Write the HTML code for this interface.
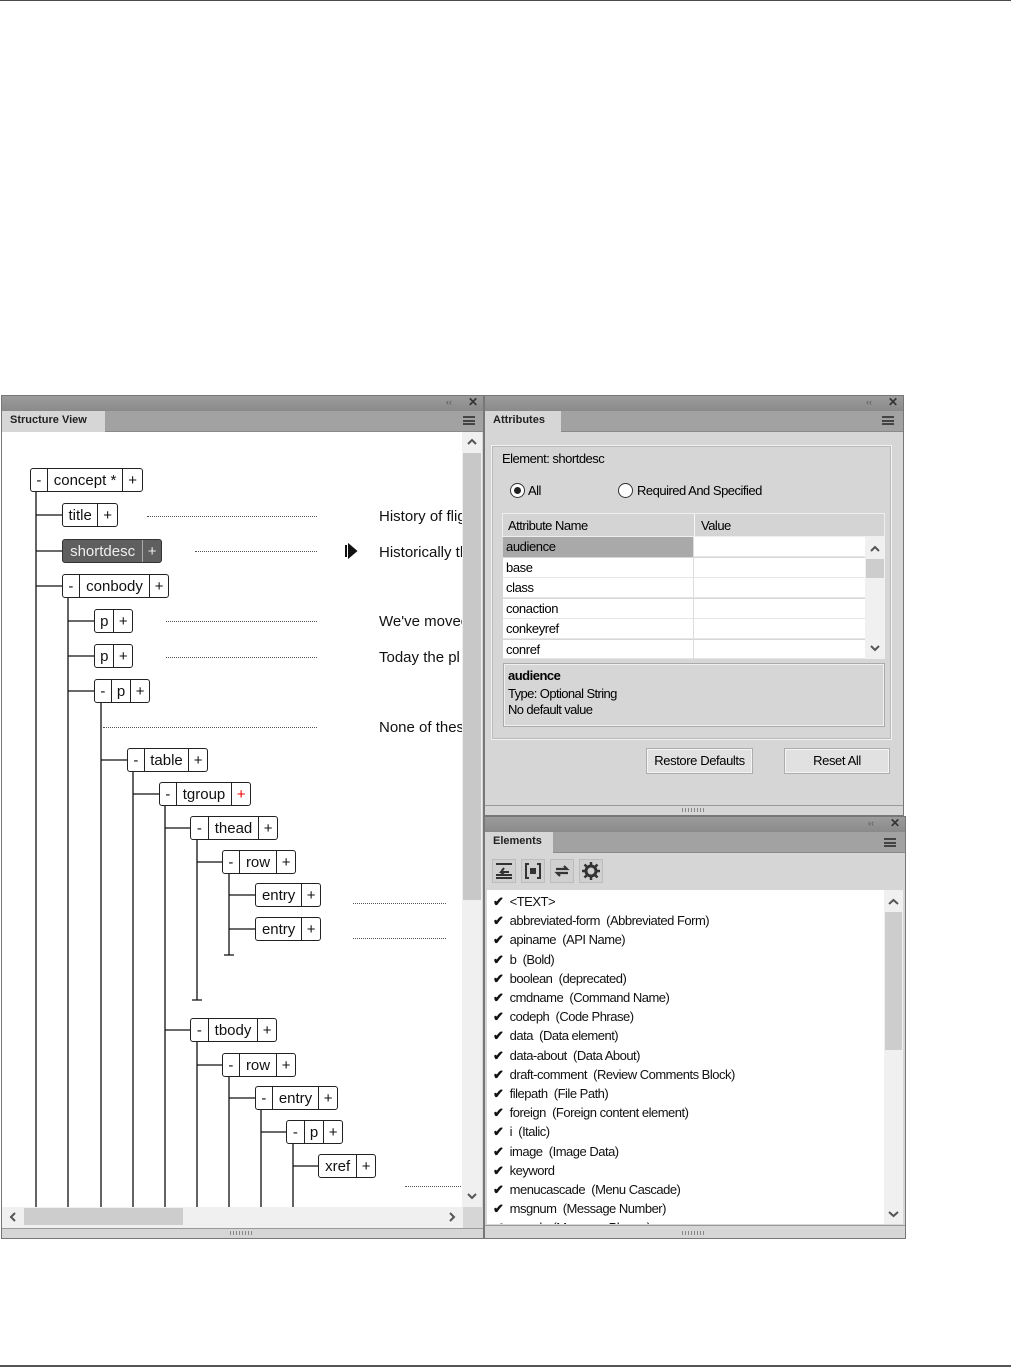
<!DOCTYPE html>
<html><head><meta charset="utf-8"><style>
*{margin:0;padding:0;box-sizing:border-box}
body{width:1011px;height:1367px;background:#fff;position:relative;overflow:hidden;font-family:"Liberation Sans",sans-serif;}
.a{position:absolute}
.tb{background:linear-gradient(#9c9c9c,#8a8a8a);}
.tabrow{background:#a2a2a2;border-bottom:1px solid #8a8a8a}
.tab{background:#d6d6d6;font-size:11px;font-weight:bold;color:#222;padding:3px 0 0 8px}
.node{position:absolute;height:24px;border:1px solid #222;border-radius:3px;background:#fff;display:flex;font-size:15px;color:#111;line-height:24px}
.node span{border-left:1px solid #222;text-align:center}
.node span:first-child{border-left:none}
.dot{position:absolute;height:0;border-top:1px dotted #555}
.t{position:absolute;font-size:15px;color:#111;white-space:nowrap}
.row{position:absolute;left:503px;width:362px;height:20px;font-size:13px;letter-spacing:-0.4px;line-height:20px;background:#fff;border-bottom:1px solid #e6e6e6}
.row b{font-weight:normal;position:absolute;left:3px}
.btn{position:absolute;height:26px;border:1px solid #adadad;background:#e1e1e1;font-size:13px;letter-spacing:-0.4px;text-align:center;line-height:24px;box-shadow:inset 0 0 0 1px #f4f4f4}
.ic{position:absolute;top:859px;width:24px;height:24px;background:#d0d0d0;border:1px solid #bcbcbc}
.chev{position:absolute}
</style></head><body>
<div class="a" style="left:0;top:0;width:1011px;height:1px;background:#4a4a4a"></div>
<div class="a" style="left:0;top:1365px;width:1011px;height:2px;background:#555"></div>

<!-- Structure panel -->
<div class="a" style="left:1px;top:395px;width:483px;height:844px;background:#d6d6d6;border:1px solid #777"></div>
<div class="a tb" style="left:2px;top:396px;width:481px;height:15px"></div>
<div class="a" style="left:446px;top:397px;font-size:9px;color:#555">‹‹</div>
<div class="a" style="left:468px;top:395px;font-size:12px;font-weight:bold;color:#333">✕</div>
<div class="a tabrow" style="left:2px;top:411px;width:481px;height:21px"></div>
<div class="a tab" style="left:2px;top:411px;width:103px;height:21px">Structure View</div>
<div class="a" style="left:463px;top:416px;width:12px;height:9px;border-top:2px solid #444;border-bottom:2px solid #444"><div style="margin-top:1.5px;height:2px;background:#444"></div></div>
<div class="a" style="left:2px;top:432px;width:461px;height:775px;background:#fff"></div>
<div class="a" style="left:462px;top:432px;width:20px;height:775px;background:#f0f0f0"></div>
<div class="a" style="left:463px;top:453px;width:18px;height:447px;background:#c8c8c8"></div>
<svg class="chev" style="left:462px;top:432px" width="20" height="20"><path d="M6 12L10 8L14 12" stroke="#555" stroke-width="2" fill="none"/></svg>
<svg class="chev" style="left:462px;top:1186px" width="20" height="20"><path d="M6 8L10 12L14 8" stroke="#555" stroke-width="2" fill="none"/></svg>
<div class="a" style="left:2px;top:1207px;width:461px;height:21px;background:#f0f0f0"></div>
<div class="a" style="left:24px;top:1208px;width:159px;height:17px;background:#cdcdcd"></div>
<svg class="chev" style="left:3px;top:1207px" width="20" height="20"><path d="M12 6L8 10L12 14" stroke="#555" stroke-width="2" fill="none"/></svg>
<svg class="chev" style="left:442px;top:1207px" width="20" height="20"><path d="M8 6L12 10L8 14" stroke="#555" stroke-width="2" fill="none"/></svg>
<div class="a" style="left:2px;top:1228px;width:481px;height:1px;background:#999"></div>
<div class="a" style="left:230px;top:1231px;width:24px;height:4px;background:repeating-linear-gradient(90deg,#888 0 1px,transparent 1px 3px)"></div>

<svg class="a" style="left:0;top:0" width="484" height="1208">
<g stroke="#111" stroke-width="1.3" fill="none">
<path d="M36 492V1207M68 598V1207M101 703V1207M133 771V1207M165 805V1207M197 839V1000M192 1000H202M229 873V955M224 955H234M197 1042V1207M229 1076V1207M261 1109V1207M293 1143V1207"/>
<path d="M36 515H62M36 551H62M36 586H62M68 621H94M68 656H94M68 691H94M101 760H127M133 794H159M165 828H190M197 862H222M229 895H255M229 929H255M165 1030H190M197 1065H222M229 1098H255M261 1132H286M293 1166H318"/>
</g>
<path d="M346 545V557M349 545V557L356 551Z" stroke="#111" stroke-width="2" fill="#111"/>
</svg>

<div class="node" style="left:30px;top:468px;width:113px"><span style="width:16px">-</span><span style="width:76px">concept *</span><span style="width:20px">+</span></div>
<div class="node" style="left:62px;top:503px;width:56px"><span style="width:35px">title</span><span style="width:20px">+</span></div>
<div class="node" style="left:62px;top:539px;width:100px;background:#5f5f5f;color:#eee;border-color:#333"><span style="width:80px">shortdesc</span><span style="width:19px;border-color:#aaa">+</span></div>
<div class="node" style="left:62px;top:574px;width:107px"><span style="width:16px">-</span><span style="width:71px">conbody</span><span style="width:19px">+</span></div>
<div class="node" style="left:94px;top:609px;width:39px"><span style="width:19px">p</span><span style="width:19px">+</span></div>
<div class="node" style="left:94px;top:644px;width:39px"><span style="width:19px">p</span><span style="width:19px">+</span></div>
<div class="node" style="left:94px;top:679px;width:56px"><span style="width:16px">-</span><span style="width:20px">p</span><span style="width:19px">+</span></div>
<div class="node" style="left:127px;top:748px;width:81px"><span style="width:16px">-</span><span style="width:45px">table</span><span style="width:19px">+</span></div>
<div class="node" style="left:159px;top:782px;width:92px"><span style="width:16px">-</span><span style="width:56px">tgroup</span><span style="width:19px;color:#e00">+</span></div>
<div class="node" style="left:190px;top:816px;width:88px"><span style="width:17px">-</span><span style="width:51px">thead</span><span style="width:19px">+</span></div>
<div class="node" style="left:222px;top:850px;width:74px"><span style="width:16px">-</span><span style="width:38px">row</span><span style="width:19px">+</span></div>
<div class="node" style="left:255px;top:883px;width:66px"><span style="width:46px">entry</span><span style="width:19px">+</span></div>
<div class="node" style="left:255px;top:917px;width:66px"><span style="width:46px">entry</span><span style="width:19px">+</span></div>
<div class="node" style="left:190px;top:1018px;width:87px"><span style="width:17px">-</span><span style="width:50px">tbody</span><span style="width:19px">+</span></div>
<div class="node" style="left:222px;top:1053px;width:74px"><span style="width:16px">-</span><span style="width:38px">row</span><span style="width:19px">+</span></div>
<div class="node" style="left:255px;top:1086px;width:83px"><span style="width:16px">-</span><span style="width:47px">entry</span><span style="width:19px">+</span></div>
<div class="node" style="left:286px;top:1120px;width:57px"><span style="width:17px">-</span><span style="width:20px">p</span><span style="width:19px">+</span></div>
<div class="node" style="left:318px;top:1154px;width:58px"><span style="width:38px">xref</span><span style="width:19px">+</span></div>

<div class="dot" style="left:147px;top:516px;width:170px"></div>
<div class="dot" style="left:195px;top:551px;width:122px"></div>
<div class="dot" style="left:166px;top:621px;width:151px"></div>
<div class="dot" style="left:166px;top:657px;width:151px"></div>
<div class="dot" style="left:103px;top:727px;width:214px"></div>
<div class="dot" style="left:353px;top:903px;width:93px"></div>
<div class="dot" style="left:353px;top:938px;width:93px"></div>
<div class="dot" style="left:405px;top:1186px;width:56px"></div>
<div class="a" style="left:379px;top:500px;width:83px;height:240px;overflow:hidden">
<div class="t" style="left:0;top:8px">History of flight</div>
<div class="t" style="left:0;top:44px">Historically the</div>
<div class="t" style="left:0;top:113px">We've moved</div>
<div class="t" style="left:0;top:149px">Today the pl</div>
<div class="t" style="left:0;top:219px">None of these</div>
</div>

<!-- Attributes panel -->
<div class="a" style="left:484px;top:395px;width:420px;height:421px;background:#d6d6d6;border:1px solid #777"></div>
<div class="a tb" style="left:485px;top:396px;width:418px;height:15px"></div>
<div class="a" style="left:866px;top:397px;font-size:9px;color:#555">‹‹</div>
<div class="a" style="left:888px;top:395px;font-size:12px;font-weight:bold;color:#333">✕</div>
<div class="a tabrow" style="left:485px;top:411px;width:418px;height:21px"></div>
<div class="a tab" style="left:485px;top:411px;width:76px;height:21px">Attributes</div>
<div class="a" style="left:882px;top:416px;width:12px;height:9px;border-top:2px solid #444;border-bottom:2px solid #444"><div style="margin-top:1.5px;height:2px;background:#444"></div></div>
<div class="a" style="left:491px;top:445px;width:401px;height:295px;border:1px solid #f2f2f2;box-shadow:inset 0 0 0 1px #bbb"></div>
<div class="a" style="left:502px;top:451px;font-size:13px;letter-spacing:-0.5px">Element: shortdesc</div>
<div class="a" style="left:510px;top:483px;width:15px;height:15px;border-radius:50%;border:1px solid #333;background:#fff"><div style="margin:3px;width:7px;height:7px;border-radius:50%;background:#222"></div></div>
<div class="a" style="left:528px;top:483px;font-size:13px;letter-spacing:-0.5px">All</div>
<div class="a" style="left:618px;top:483px;width:15px;height:15px;border-radius:50%;border:1px solid #333;background:#fff"></div>
<div class="a" style="left:637px;top:483px;font-size:13px;letter-spacing:-0.5px">Required And Specified</div>
<div class="a" style="left:502px;top:513px;width:383px;height:24px;background:#d4d4d4;border:1px solid #eee"></div>
<div class="a" style="left:694px;top:514px;width:1px;height:23px;background:#f6f6f6"></div>
<div class="a" style="left:508px;top:518px;font-size:13px;letter-spacing:-0.5px">Attribute Name</div>
<div class="a" style="left:701px;top:518px;font-size:13px;letter-spacing:-0.5px">Value</div>
<div class="row" style="top:537px"><div style="position:absolute;left:0;top:0;width:190px;height:20px;background:#a9a9a9"></div><b>audience</b></div>
<div class="row" style="top:558px"><b>base</b></div>
<div class="row" style="top:578px"><b>class</b></div>
<div class="row" style="top:599px"><b>conaction</b></div>
<div class="row" style="top:619px"><b>conkeyref</b></div>
<div class="row" style="top:640px;height:19px"><b>conref</b></div>
<div class="a" style="left:693px;top:537px;width:1px;height:122px;background:#ddd"></div>
<div class="a" style="left:865px;top:537px;width:20px;height:122px;background:#f0f0f0"></div>
<div class="a" style="left:866px;top:559px;width:18px;height:19px;background:#cdcdcd"></div>
<svg class="chev" style="left:865px;top:539px" width="20" height="20"><path d="M6 12L10 8L14 12" stroke="#555" stroke-width="2" fill="none"/></svg>
<svg class="chev" style="left:865px;top:638px" width="20" height="20"><path d="M6 8L10 12L14 8" stroke="#555" stroke-width="2" fill="none"/></svg>
<div class="a" style="left:503px;top:663px;width:382px;height:64px;border:1px solid #aaa;box-shadow:inset 0 0 0 1px #f0f0f0;background:#d6d6d6"></div>
<div class="a" style="left:508px;top:668px;font-size:13px;font-weight:bold;letter-spacing:-0.5px">audience</div>
<div class="a" style="left:508px;top:686px;font-size:13px;letter-spacing:-0.6px;line-height:16px">Type: Optional String<br>No default value</div>
<div class="btn" style="left:646px;top:748px;width:107px">Restore Defaults</div>
<div class="btn" style="left:784px;top:748px;width:106px">Reset All</div>
<div class="a" style="left:485px;top:805px;width:418px;height:1px;background:#999"></div>
<div class="a" style="left:682px;top:808px;width:24px;height:4px;background:repeating-linear-gradient(90deg,#888 0 1px,transparent 1px 3px)"></div>

<!-- Elements panel -->
<div class="a" style="left:484px;top:816px;width:422px;height:423px;background:#d6d6d6;border:1px solid #777"></div>
<div class="a tb" style="left:485px;top:817px;width:420px;height:15px"></div>
<div class="a" style="left:868px;top:818px;font-size:9px;color:#555">‹‹</div>
<div class="a" style="left:890px;top:816px;font-size:12px;font-weight:bold;color:#333">✕</div>
<div class="a tabrow" style="left:485px;top:832px;width:420px;height:21px"></div>
<div class="a tab" style="left:485px;top:832px;width:68px;height:21px">Elements</div>
<div class="a" style="left:884px;top:838px;width:12px;height:9px;border-top:2px solid #444;border-bottom:2px solid #444"><div style="margin-top:1.5px;height:2px;background:#444"></div></div>
<div class="ic" style="left:492px"><svg width="22" height="22"><path d="M3 4H19M3 18H19M3 15H19" stroke="#333" stroke-width="2"/><path d="M16 12H8L11 8M8 12L11 15" stroke="#333" stroke-width="2" fill="none"/></svg></div>
<div class="ic" style="left:521px"><svg width="22" height="22"><path d="M7 4H4V18H7M15 4H18V18H15" stroke="#333" stroke-width="2" fill="none"/><rect x="8" y="8" width="6" height="6" fill="#333"/></svg></div>
<div class="ic" style="left:550px"><svg width="22" height="22"><path d="M5 9H16L13 6M17 13H6L9 16" stroke="#333" stroke-width="2.2" fill="none"/></svg></div>
<div class="ic" style="left:579px"><svg width="22" height="22"><circle cx="11" cy="11" r="5" stroke="#333" stroke-width="3" fill="none"/><path d="M11 2V6M11 16V20M2 11H6M16 11H20M4.5 4.5L7.5 7.5M14.5 14.5L17.5 17.5M4.5 17.5L7.5 14.5M14.5 7.5L17.5 4.5" stroke="#333" stroke-width="2.5"/></svg></div>
<div class="a" style="left:487px;top:890px;width:397px;height:334px;background:#fff;overflow:hidden"></div>
<div class="a" style="left:884px;top:890px;width:19px;height:334px;background:#f0f0f0"></div>
<div class="a" style="left:885px;top:912px;width:17px;height:138px;background:#cdcdcd"></div>
<svg class="chev" style="left:884px;top:892px" width="19" height="20"><path d="M5 12L9.5 8L14 12" stroke="#555" stroke-width="2" fill="none"/></svg>
<svg class="chev" style="left:884px;top:1204px" width="19" height="20"><path d="M5 8L9.5 12L14 8" stroke="#555" stroke-width="2" fill="none"/></svg>
<div class="a" style="left:487px;top:890px;width:397px;height:334px;overflow:hidden">
<div style="position:relative;left:6px;top:2px;font-size:13px;letter-spacing:-0.5px;line-height:19.2px;color:#111;white-space:nowrap">
<div><b>✔</b>&nbsp; &lt;TEXT&gt;</div>
<div><b>✔</b>&nbsp; abbreviated-form&nbsp; (Abbreviated Form)</div>
<div><b>✔</b>&nbsp; apiname&nbsp; (API Name)</div>
<div><b>✔</b>&nbsp; b&nbsp; (Bold)</div>
<div><b>✔</b>&nbsp; boolean&nbsp; (deprecated)</div>
<div><b>✔</b>&nbsp; cmdname&nbsp; (Command Name)</div>
<div><b>✔</b>&nbsp; codeph&nbsp; (Code Phrase)</div>
<div><b>✔</b>&nbsp; data&nbsp; (Data element)</div>
<div><b>✔</b>&nbsp; data-about&nbsp; (Data About)</div>
<div><b>✔</b>&nbsp; draft-comment&nbsp; (Review Comments Block)</div>
<div><b>✔</b>&nbsp; filepath&nbsp; (File Path)</div>
<div><b>✔</b>&nbsp; foreign&nbsp; (Foreign content element)</div>
<div><b>✔</b>&nbsp; i&nbsp; (Italic)</div>
<div><b>✔</b>&nbsp; image&nbsp; (Image Data)</div>
<div><b>✔</b>&nbsp; keyword</div>
<div><b>✔</b>&nbsp; menucascade&nbsp; (Menu Cascade)</div>
<div><b>✔</b>&nbsp; msgnum&nbsp; (Message Number)</div>
<div><b>✔</b>&nbsp; msgph&nbsp; (Message Phrase)</div>
</div></div>
<div class="a" style="left:485px;top:1225px;width:420px;height:1px;background:#999"></div>
<div class="a" style="left:682px;top:1231px;width:24px;height:4px;background:repeating-linear-gradient(90deg,#888 0 1px,transparent 1px 3px)"></div>
</body></html>
